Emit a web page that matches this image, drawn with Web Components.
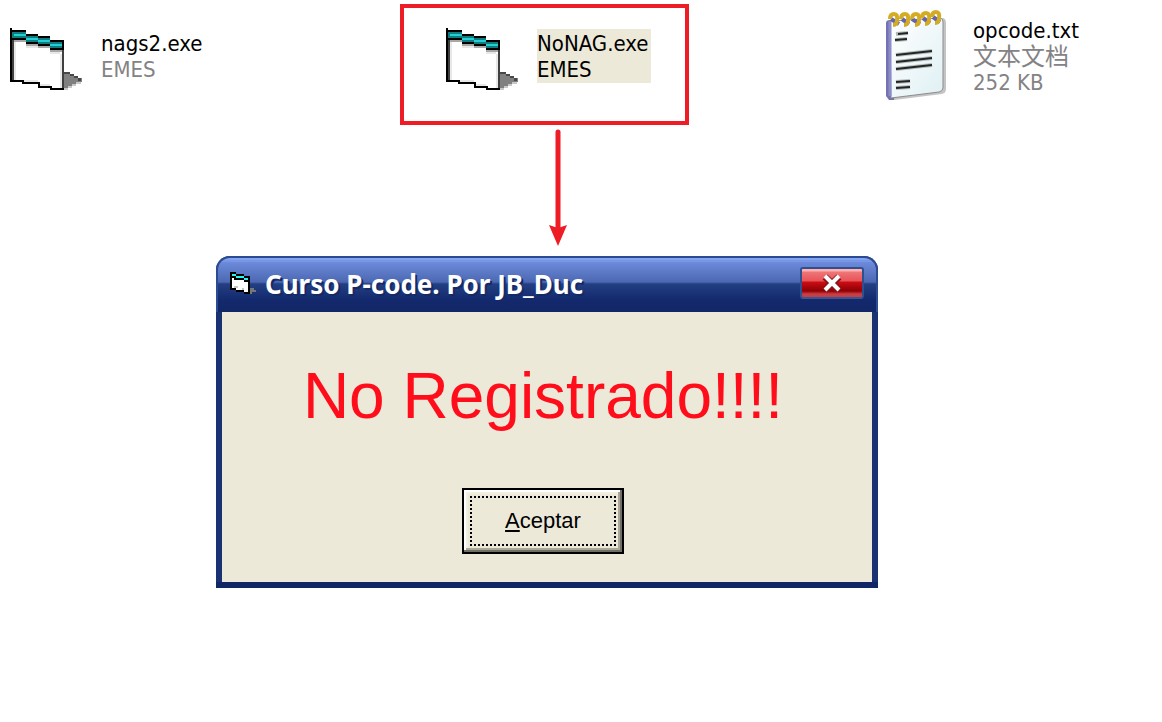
<!DOCTYPE html>
<html lang="es">
<head>
<meta charset="utf-8">
<title>Curso P-code</title>
<style>
  body { margin: 0; background: #fff; font-family: "DejaVu Sans Condensed", "Noto Sans CJK SC", sans-serif; }
</style>
</head>
<body>
<desk-top>
  <file-item slot="files" name="nags2.exe"><program-icon slot="icon"></program-icon><span>EMES</span></file-item>
  <file-item slot="files" name="NoNAG.exe" selected><program-icon slot="icon"></program-icon><span>EMES</span><call-out slot="note"></call-out></file-item>
  <file-item slot="files" name="opcode.txt"><notepad-icon slot="icon"></notepad-icon><span lang="zh">文本文档</span><span>252 KB</span></file-item>
  <dialog-window slot="window" heading="Curso P-code. Por JB_Duc">
    No Registrado!!!!
    <accept-button slot="actions"></accept-button>
  </dialog-window>
</desk-top>

<script>
const define = (name, html, setup) => {
  const template = document.createElement('template');
  template.innerHTML = html;
  customElements.define(name, class extends HTMLElement {
    constructor() {
      super();
      this.attachShadow({ mode: 'open' }).append(template.content.cloneNode(true));
    }
    connectedCallback() { if (setup) setup(this, this.shadowRoot); }
  });
};

define('desk-top', `
  <style>
    :host { display: block; }
    .files { display: grid; grid-template-columns: 436fr 436fr 280fr; padding: 8px 0 0 10px; }
    .stage { display: grid; grid-template-columns: 216fr 662fr 284fr; margin-top: 152px; }
    ::slotted([slot=window]) { grid-column: 2; }
  </style>
  <section class="files"><slot name="files"></slot></section>
  <main class="stage"><slot name="window"></slot></main>`);

define('file-item', `
  <style>
    :host { display: flex; align-items: center; gap: 15px; position: relative; font-size: 22px; line-height: 26px; color: #848284; white-space: nowrap; }
    .label { display: flex; flex-direction: column; padding: 2px 2px 0 0; }
    .name { color: #000; }
    :host([selected]) .label { background: #ece9d8; color: #000; }
    ::slotted([lang=zh]) { font-size: 24px; height: 26px; }
  </style>
  <slot name="icon"></slot>
  <div class="label"><span class="name"></span><slot></slot></div>
  <slot name="note"></slot>`,
  (el, root) => { root.querySelector('.name').textContent = el.getAttribute('name'); });

define('program-icon', `
  <style>:host { display: block; width: 76px; height: 96px; } svg { display: block; }</style>
  <svg width="76" height="96" shape-rendering="crispEdges" aria-hidden="true">
    <path fill="#000" d="M0 20h2v2h14v4h12v2h12v4h14v50H40v-2H28v-4H12v-2H0z"/>
    <path fill="#fff" d="M4 32h12v4h12v2h12v4h12v38H42v-2H30v-4H14v-2H4z"/>
    <path fill="#404040" d="M2 32h2v40H2zM52 42h2v38h-2z"/>
    <path fill="#107c80" d="M2 24h14v4h12v2h12v4h12v6H40v-4H28v-2H16v-4H2z"/>
    <path fill="#22cfd3" d="M4 26h12v2H4zM16 30h12v2H16zM28 32h12v2H28zM40 36h12v2H40z"/>
    <path fill="#a8a8a8" d="M4 32h12v4h12v2h12v4h12v2H40v-4H28v-2H16v-4H4z"/>
    <path fill="#e8e8e8" d="M50 46h2v34h-2zM4 34h2v38H4zM16 38h12v2H16zM40 44h10v2H40zM14 72h14v2H14zM30 76h10v2H30z"/>
    <path fill="#808080" d="M54 64h6v2h4v2h4v2h4v4h-6v2h-4v2h-4v2h-4z"/>
    <path fill="#484848" d="M54 64h6v2h4v2h-4v-2h-6zM64 68h4v2h-4zM68 70h3v3h-3z"/>
    <path fill="#c8c8c8" d="M54 80h4v-2h4v2h-4v2h-4zM62 76h4v-2h5v2h-5v2h-4z"/>
  </svg>`);

define('notepad-icon', `
  <style>:host { display: block; width: 76px; height: 96px; } svg { display: block; }</style>
  <svg width="76" height="96" aria-hidden="true">
    <defs><linearGradient id="p" x1="0" y1="0" x2="1" y2="1"><stop offset="0" stop-color="#fff"/><stop offset="1" stop-color="#dff0f4"/></linearGradient></defs>
    <path fill="#c4c4c4" d="M7 16L60 10q4 0 4 5V81q0 4-4 5L12 92z"/>
    <path fill="#7272b4" d="M4 15q0-3 4-3l4 2v78H7l-3-4z"/>
    <path fill="url(#p)" stroke="#8c8c8c" d="M8 13l50-3q3 0 3 4v66q0 3-4 4L9 90z"/>
    <path stroke="#8c8cc8" stroke-width="3" d="M8 13v75"/>
    <g fill="none" stroke="#6464b0" stroke-width="4"><path d="M9 11l8 5M20 11l7 5M30 11l8 5M41 10l7 5M51 9l7 5"/></g>
    <g fill="none" stroke="#d4ac24" stroke-width="4">
      <path d="M8 11q0-5 4-5t3 6q0 5-4 5"/><path d="M19 11q0-5 4-5t3 6q0 5-4 5"/><path d="M30 11q0-5 4-5t3 6q0 5-4 5"/><path d="M40 10q0-5 4-5t3 6q0 5-4 5"/><path d="M50 9q0-5 4-5t3 6q0 5-4 5"/>
    </g>
    <g fill="none" stroke="#b4bcbc" stroke-width="4"><path d="M14 26l12-1M13 32l12-1M14 47l36-4M14 54l36-4M14 61l36-4M14 74l14-1M14 80l14-1"/></g>
    <g fill="none" stroke="#242424" stroke-width="2"><path d="M16 26l10-1M13 32l12-1M14 47l36-4M14 54l36-4M14 61l36-4M14 74l14-1M14 80l14-1"/></g>
  </svg>`);

define('call-out', `
  <style>
    :host { position: absolute; left: -46px; top: -4px; width: 289px; pointer-events: none; }
    .frame { box-sizing: border-box; height: 121px; border: 4px solid #ee1c25; }
    svg { display: block; margin: 4px 0 0 148px; }
  </style>
  <div class="frame"></div>
  <svg width="20" height="118" aria-hidden="true">
    <path stroke="#ee1c25" stroke-width="5" stroke-linecap="round" d="M10 3v98"/>
    <path fill="#ee1c25" d="M1 96l9 3 9-3-9 21z"/>
  </svg>`);

define('dialog-window', `
  <style>
    :host { display: block; box-sizing: border-box; background: #1a3272; border-radius: 14px 14px 0 0; }
    header { box-sizing: border-box; height: 56px; display: flex; align-items: center; gap: 9px; padding: 0 12px 2px; border: 2px solid #2b4b93; border-bottom: 0; border-radius: 14px 14px 0 0;
      background: linear-gradient(#83a3f1 0 2px, #7797e6 2px 4px, #6d8bdb 4px, #4c68b2 24px, #233f82 26px, #13296d 42px, #112765 54px); }
    .mark { width: 26px; height: 24px; flex: none; }
    h1 { flex: 1; margin: 0; color: #fff; font: bold 26px/32px "Noto Sans", sans-serif; white-space: nowrap; text-shadow: 2px 2px 0 #142a66; }
    .close { flex: none; width: 64px; height: 32px; padding: 0; border: 2px solid #304f91; border-bottom-color: #3c5590; background: linear-gradient(#ffb1b1 0 2px, #ee7777 3px, #e85358 12px, #cb0d14 13px, #8d0004 22px, #c83e45 25px); border-radius: 3px; margin-bottom: 2px; display: grid; place-items: center; }
    .body { margin: 0 6px; background: #ece9d8; display: flex; flex-direction: column; align-items: center; padding: 48px 8px 28px 0; }
    .foot { height: 6px; background: #112765; }
    p { margin: 0 0 56px; font: 64px/72px "Liberation Sans", Arial, sans-serif; color: #ff0d1b; white-space: nowrap; }
  </style>
  <header>
    <svg class="mark" viewBox="0 0 26 24" shape-rendering="crispEdges" aria-hidden="true">
      <path fill="#000" d="M0 0h6v2h8v2h6v18h-6v-2H6v-2H0z"/>
      <path fill="#fff" d="M2 6h2v2h10v2h4v10h-4v-2H6v-2H2z"/>
      <path fill="#26f4f4" d="M2 2h4v2H2zM6 4h8v2H6zM14 6h4v2h-4z"/>
      <path fill="#c4c4c4" d="M4 14h4v2H4zM12 16h2v2h-2z"/>
      <path fill="#777" d="M20 16h4v2h2v2h-4v2h-2z"/>
    </svg>
    <h1></h1>
    <button class="close" type="button" aria-label="Cerrar"><svg width="24" height="20" viewBox="0 0 24 20"><path stroke="#8e1018" stroke-width="7" d="M5 4l14 13M19 4L5 17"/><path stroke="#fff" stroke-width="4" d="M5 3l14 14M19 3L5 17"/></svg></button>
  </header>
  <div class="body">
    <p><slot></slot></p>
    <slot name="actions"></slot>
  </div>
  <div class="foot"></div>`,
  (el, root) => { root.querySelector('h1').textContent = el.getAttribute('heading'); });

define('accept-button', `
  <style>
    :host { display: block; }
    button { display: block; box-sizing: border-box; width: 162px; height: 66px; padding: 4px; border: 2px solid #000; background: #ece9d8; color: #000; font: 22px/26px "Liberation Sans", Arial, sans-serif;
      box-shadow: inset -2px -2px #716f64, inset 2px 2px #fff, inset -4px -4px #aca899, inset 4px 4px #f1efe2; }
    .focus { display: grid; place-items: center; height: 50px; margin: 0 2px; box-sizing: border-box; padding: 2px;
      background:
        repeating-linear-gradient(90deg, #000 0 2px, transparent 2px 4px) top / 100% 2px no-repeat,
        repeating-linear-gradient(90deg, #000 0 2px, transparent 2px 4px) bottom / 100% 2px no-repeat,
        repeating-linear-gradient(#000 0 2px, transparent 2px 4px) left / 2px 100% no-repeat,
        repeating-linear-gradient(#000 0 2px, transparent 2px 4px) right / 2px 100% no-repeat; }
    u { text-decoration: underline 2px; text-underline-offset: 2px; text-decoration-skip-ink: none; }
  </style>
  <button type="button"><span class="focus"><span><u>A</u>ceptar</span></span></button>`);
</script>
</body>
</html>
